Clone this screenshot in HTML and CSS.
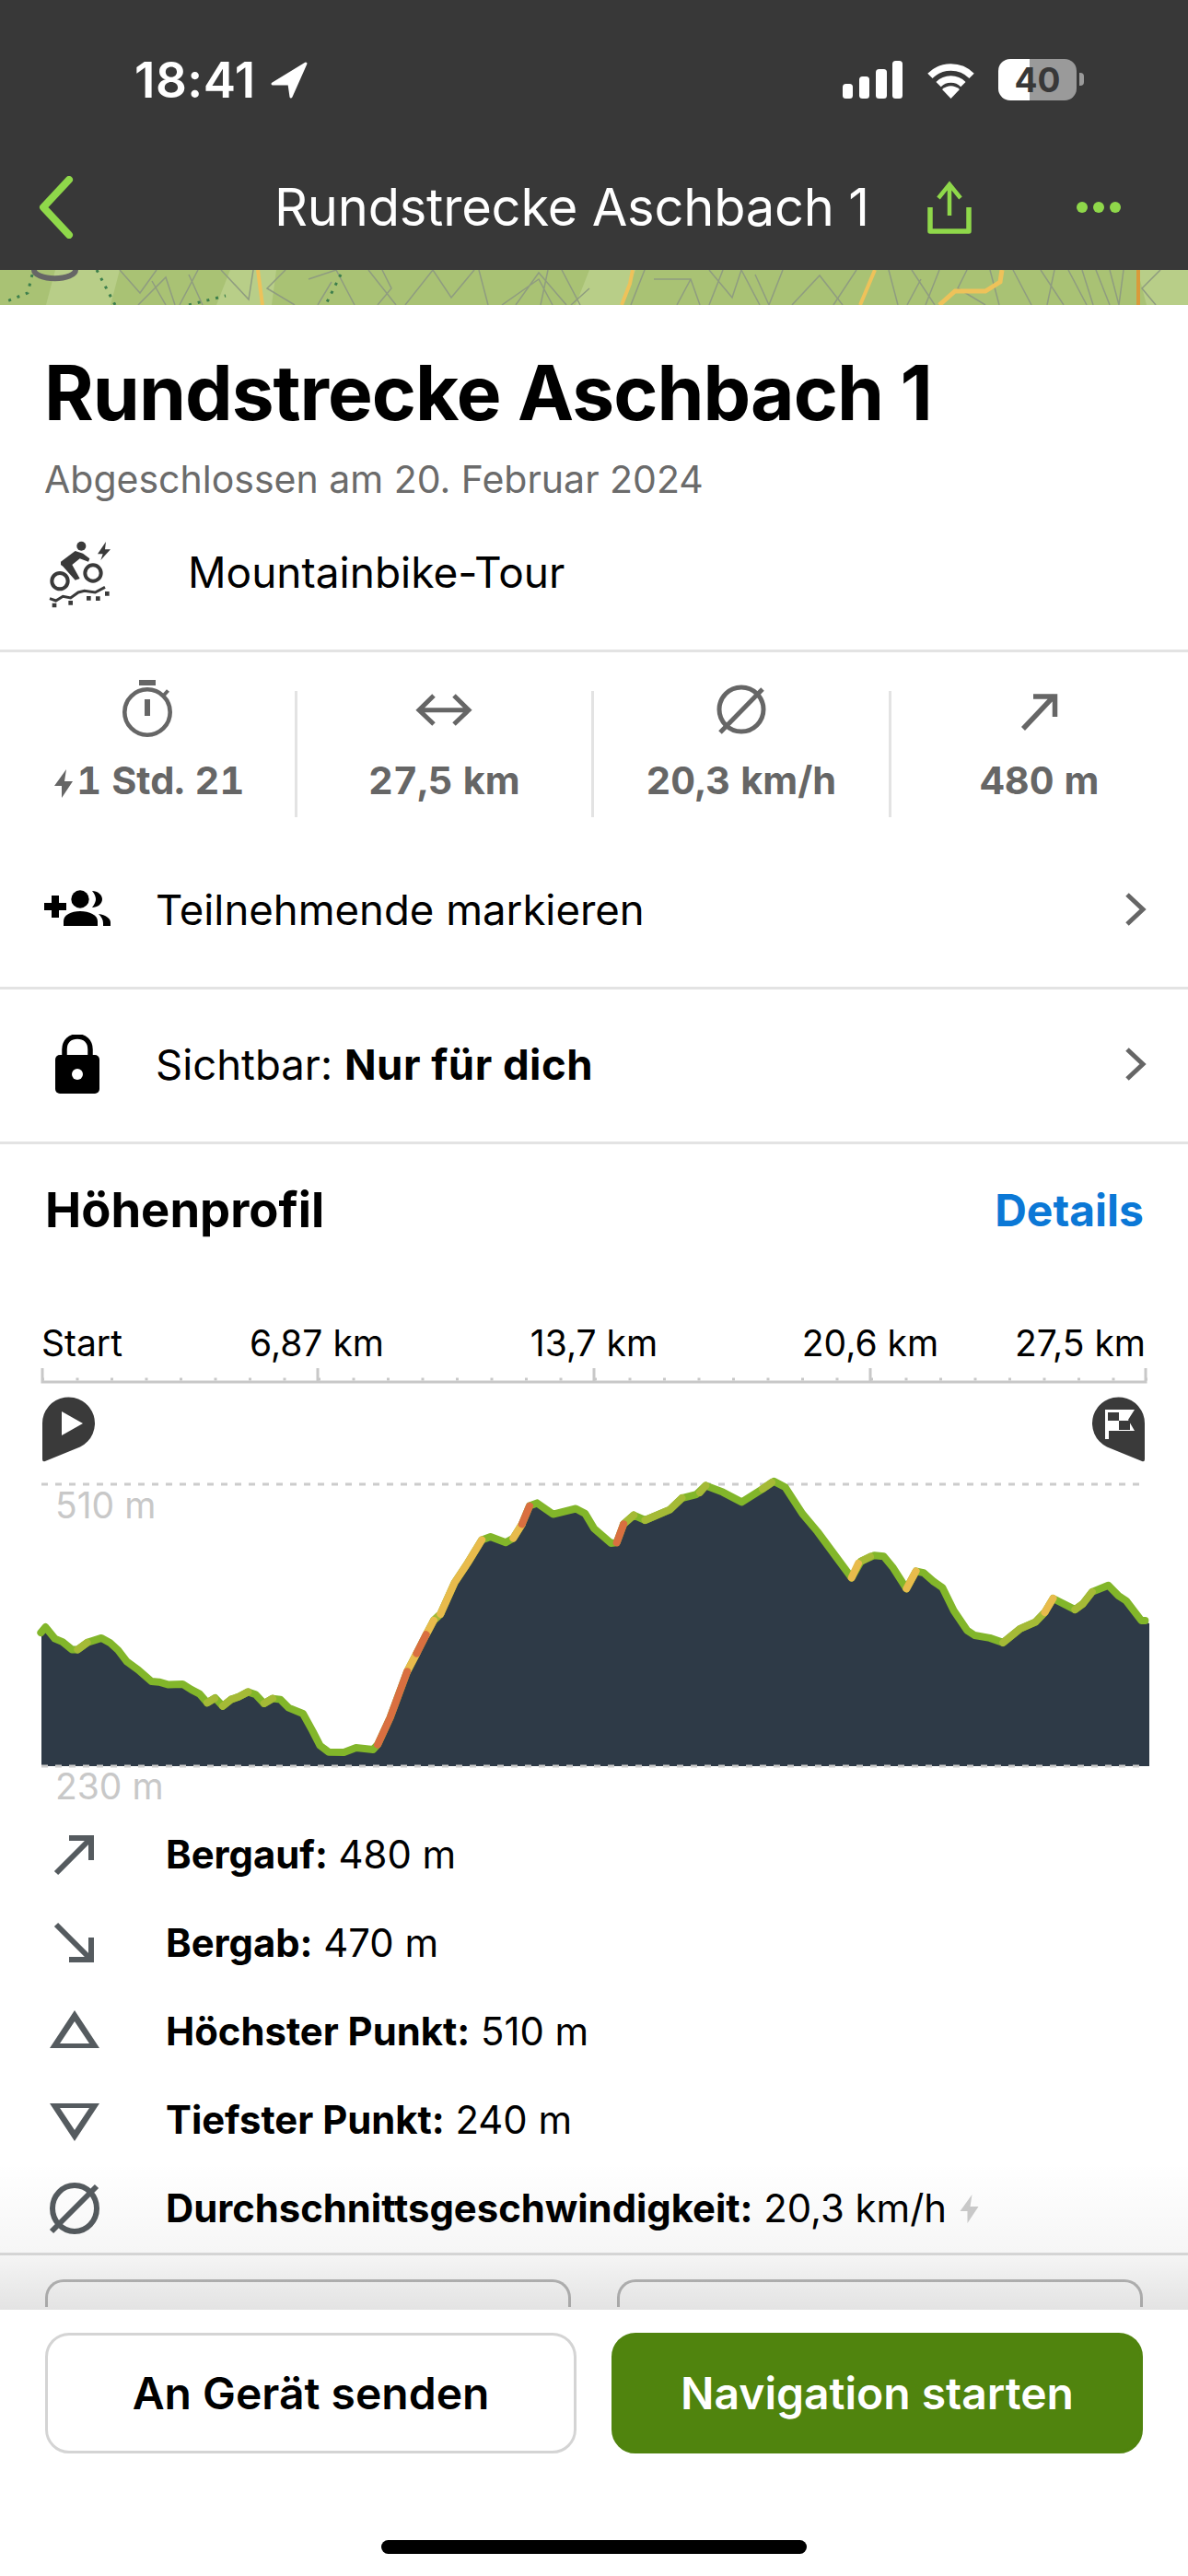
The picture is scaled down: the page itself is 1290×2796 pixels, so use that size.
FILE: index.html
```html
<!DOCTYPE html>
<html lang="de">
<head>
  <meta charset="UTF-8" />
  <title>Rundstrecke Aschbach 1</title>
  <link rel="stylesheet" href="styles.css">
</head>
<body>
<div class="page">

  <!-- Status bar + nav -->
  <header class="top">
    <div class="status-bar">
      <span class="time">18:41</span>
      <svg class="loc" width="41" height="40" viewBox="0 0 41 40"><path d="M39 2 3 24h18l2 14z" fill="#fff" stroke="#fff" stroke-width="3" stroke-linejoin="round"/></svg>
      <div class="status-right">
        <svg width="66" height="42" viewBox="0 0 66 42" fill="#fff">
          <rect x="0" y="25" width="11" height="16" rx="3.5"/>
          <rect x="18" y="17" width="11" height="24" rx="3.5"/>
          <rect x="36" y="9" width="12" height="32" rx="3.5"/>
          <rect x="54" y="0" width="11" height="41" rx="3.5"/>
        </svg>
        <svg class="wifi" width="57" height="40" viewBox="0 0 57 40">
          <path d="M5.9 15.4a32 32 0 0 1 45.2 0" fill="none" stroke="#fff" stroke-width="7.5"/>
          <path d="M15.1 24.6a19 19 0 0 1 26.8 0" fill="none" stroke="#fff" stroke-width="7.5"/>
          <path d="M28.5 40 19 30q9.500-7.500 19 0z" fill="#fff"/>
        </svg>
        <div class="battery">40</div>
      </div>
    </div>
    <nav class="nav-bar">
      <svg width="38" height="68" viewBox="0 0 38 68"><path d="M33 4 5 34l28 30" fill="none" stroke="#8fd84a" stroke-width="8" stroke-linecap="round" stroke-linejoin="round"/></svg>
      <div class="nav-title">Rundstrecke Aschbach 1</div>
      <svg width="48" height="58" viewBox="0 0 48 58" fill="none" stroke="#8fd84a">
        <path d="M24 38V4M12 19 24 4l12 15" stroke-width="4.500"/>
        <path d="M3 29v26h42V29" stroke-width="5.500" stroke-linejoin="round"/>
      </svg>
      <div class="nav-dots"><i></i><i></i><i></i></div>
    </nav>
  </header>

  <!-- Map strip -->
  <svg class="map" width="1290" height="38" viewBox="0 0 1290 38">
    <rect width="1290" height="38" fill="#a9c274"/>
    <path d="M60 0h70l-10 38H50zM250 0h50l-5 38h-60zM640 0h50l-15 38h-50zM1235 0h55v38h-45z" fill="#b8ce88"/>
    <g fill="none" stroke="#8f9c80" stroke-width="1.500">
      <path d="M130 0l22 25 18-25M150 38l30-30 10 30M215 0l-20 38M240 0l30 32 5-32M165 12l15 26M205 5l15 33"/>
      <path d="M310 0l-20 20 30 18M335 10l30-10 20 38M400 0l30 38M440 38l30-38 20 30 25-30M345 38l15-25M415 0l10 20-15 18"/>
      <path d="M520 0l10 38M545 38l40-28 15 28M610 0l20 38M640 20l-20 18M700 0l-15 38M560 38l25-35 30 35M595 0l-8 38"/>
      <path d="M710 10h40l10 28M770 0l25 30 10-30 20 38M850 0l-15 38M860 38l30-32 25 32M785 0l-15 38M820 5l15 33M735 38l15-28"/>
      <path d="M930 0l-25 38M990 0l25 38M1020 0l-15 38M1050 0l-10 20 30 18M1100 0l20 38M965 0l10 38M1000 10l-15 28M1075 0l10 38"/>
      <path d="M1130 0l25 38M1160 0l20 38M1190 0l15 38M1260 0l-20 20 15 18M1145 0l-8 38M1175 0l12 38M1205 0l10 38M1220 0l-5 38"/>
    </g>
    <g fill="none" stroke="#3d7f4c" stroke-width="3" stroke-dasharray="3 7">
      <path d="M35 5 30 25 5 35M105 0l20 38M370 5l-15 30M205 38l40-10"/>
    </g>
    <path d="M37 0a22 9 0 0 0 45 0" fill="none" stroke="#666" stroke-width="6"/>
    <g fill="none" stroke="#eec25a" stroke-width="4">
      <path d="M280 0l5 38M687 0l-3 15-9 23M950 0l-16 38"/>
      <path d="M1088 0l-2 13-16 10h-33l-17 15" stroke-width="5"/>
      <path d="M1236 0v38" stroke="#d99a3a"/>
    </g>
  </svg>

  <div class="scroll">

    <section class="summary">
      <h1>Rundstrecke Aschbach 1</h1>
      <p class="finished">Abgeschlossen am 20. Februar 2024</p>
      <div class="tour-type">
        <svg width="100" height="90" viewBox="0 -6 300 270" fill="#3a3a3a">
          <circle cx="145" cy="44" r="15"/>
          <path d="M78 95l47-35 25 8 22 17-4 10-28-10-25 20 25 45-15 5-40-45-7-5z"/>
          <g fill="none" stroke="#3a3a3a" stroke-width="12">
            <circle cx="75" cy="158" r="26"/>
            <circle cx="183" cy="132" r="26"/>
          </g>
          <path d="M42 215l20 7 23-14 25 5 25-18 20-5 35 5 32-17" fill="none" stroke="#3a3a3a" stroke-width="9"/>
          <path d="M50 230h14v14H50zM103 222h14v14h-14zM162 207h14v14h-14zM192 208h14v14h-14zM222 192h14v14h-14z"/>
          <path d="M225 30l-27 40h17l-7 20 32-35h-18z"/>
        </svg>
        <span>Mountainbike-Tour</span>
      </div>
    </section>

    <section class="stats">
      <div class="stat stat-time">
        <svg class="stat-icon" width="64" height="64" viewBox="0 0 64 64" fill="none" stroke="#666">
          <path d="M23 5h18" stroke-width="6"/>
          <circle cx="32" cy="37" r="24.700" stroke-width="4.600"/>
          <path d="M32 23v18" stroke-width="6"/>
          <path d="M49.500 19l5-5.500" stroke-width="4"/>
        </svg>
        <div class="stat-value"><svg class="bolt" width="20" height="31" viewBox="0 0 20 31"><path d="M13 0 0 18h8L8 31 20 13h-9z" fill="#666"/></svg>1 Std. 21</div>
      </div>
      <div class="stat">
        <svg class="stat-icon" width="64" height="64" viewBox="0 0 64 64" fill="none" stroke="#666" stroke-width="5">
          <path d="M5 34.700h54M21 19 5 34.700 21 50M43 19l16 15.700L43 50"/>
        </svg>
        <div class="stat-value">27,5 km</div>
      </div>
      <div class="stat">
        <svg class="stat-icon" width="64" height="64" viewBox="0 0 64 64" fill="none" stroke="#666" stroke-width="5">
          <circle cx="32" cy="34" r="24"/>
          <path d="M9 59 55 12"/>
        </svg>
        <div class="stat-value">20,3 km/h</div>
      </div>
      <div class="stat">
        <svg class="stat-icon" width="64" height="64" viewBox="0 0 64 64" fill="none" stroke="#666" stroke-width="5.500">
          <path d="M14 55 48 19M25 20h23.500v22"/>
        </svg>
        <div class="stat-value">480 m</div>
      </div>
    </section>

    <section class="actions">
      <div class="action-row">
        <svg width="76" height="44" viewBox="0 0 76 44">
          <path d="M10 7h8v8h8v8h-8v8h-8v-8H2v-8h8z"/>
          <circle cx="41" cy="11" r="9.700"/>
          <path d="M23 40v-5c0-7 8-11 18-11s19 4 19 11v5z"/>
          <path d="M54 2c6 0 11 4 11 9s-5 9-11 9c3-4 4-7 4-9s-1-6-4-9zM61 27c8 1 13 5 13 9v4h-8v-3c0-4-2-7-5-10z"/>
        </svg>
        <span class="action-label">Teilnehmende markieren</span>
        <svg class="chevron" width="24" height="36" viewBox="0 0 24 36"><path d="M3 2l17 16L3 34" fill="none" stroke="#666" stroke-width="5"/></svg>
      </div>
      <div class="action-row">
        <svg width="76" height="64" viewBox="0 0 76 64">
          <path d="M24 24v-8c0-9 6-14 14-14s14 5 14 14v8" fill="none" stroke="#000" stroke-width="5.500"/>
          <rect x="14" y="22" width="48" height="42" rx="5"/>
          <circle cx="38" cy="43" r="6" fill="#fff"/>
        </svg>
        <span class="action-label">Sichtbar: <b>Nur für dich</b></span>
        <svg class="chevron" width="24" height="36" viewBox="0 0 24 36"><path d="M3 2l17 16L3 34" fill="none" stroke="#666" stroke-width="5"/></svg>
      </div>
    </section>

    <section class="elevation">
      <div class="section-head">
        <h2>Höhenprofil</h2>
        <span class="details-link">Details</span>
      </div>

      <svg class="chart" width="1290" height="535" viewBox="0 30 1290 535">
        <text class="axis-label" x="45" y="72">Start</text>
        <text class="axis-label" x="344" y="72" text-anchor="middle">6,87 km</text>
        <text class="axis-label" x="645" y="72" text-anchor="middle">13,7 km</text>
        <text class="axis-label" x="945" y="72" text-anchor="middle">20,6 km</text>
        <text class="axis-label" x="1244" y="72" text-anchor="end">27,5 km</text>

        <!-- ruler -->
        <path class="ruler" d="M46 85v15h1198V85M345 85v15M645 85v15M945 85v15"/>
        <line class="ruler" x1="45" y1="97" x2="1246" y2="97" stroke-dasharray="3 34.500" stroke-width="6"/>

        <!-- start / finish pins -->
        <path id="pin" d="M46 145a28.500 28.500 0 1 1 41 25.500L49 186q-3 1-3-2z" fill="#3a3a3a"/>
        <path d="M67 132l23 13-23 13z" fill="#fff"/>
        <use href="#pin" transform="translate(1289 0) scale(-1 1)"/>
        <path d="M1200 130h32l-7 11 7 12h-28v9h-4z" fill="#fff"/>
        <path d="M1203 133h12v9h-12zM1215 142h12v10h-12z" fill="#3a3a3a"/>

        <line class="dash" x1="45" y1="211" x2="1240" y2="211"/>
        <text class="range-label" x="60" y="248">510 m</text>

        <polygon class="area" points="45,517 45,372 49.400,366.100 59.600,378.600 67.900,382.100 78.100,390.400 84.300,390.400 94.600,382.900 110.200,377.900 119.300,382.900 128.300,391.100 137.800,403.600 150.100,412.500 164.500,425 172.700,425.700 183,428.600 198.200,427.900 207.700,433.900 216.800,438.600 225,448.200 233.600,442.900 241.800,451.800 250.900,444.600 259.100,441.800 269.400,436.400 277.600,439.300 286.700,448.900 296.100,443.600 304.400,444.600 313.400,453.600 329,460 339.300,478.600 347.500,494.600 357,501.800 373.500,502.100 386.600,497.100 405.100,498.900 410.100,493.600 423.600,464.300 442.100,414.300 452.400,394.600 462.700,374.300 470.900,358.900 478.300,351.800 493.600,317.900 507.900,296.400 523.200,271.400 532.600,267.900 549.100,274.300 557.300,269.600 566.800,254.300 575,234.600 583.200,231.400 600.500,243.600 625.200,237.500 635.400,242.900 645,258.900 663.500,275 669.700,274.300 677.100,254.300 688.200,244.600 700.500,250 727.300,238.600 740.400,226.100 756.100,222.100 766.300,212.500 784.800,219.600 805.400,230.400 828,216.100 840.400,207.900 852.700,214.300 871.200,242.900 887.700,262.500 906.200,287.500 924.700,312.500 935,294.600 949.400,288.200 959.600,289.300 969.900,301.800 984.300,324.300 994.600,305.400 1002.800,307.100 1013.100,316.100 1023.400,323.200 1035.700,348.200 1050.100,369.600 1058.300,375 1074.800,377.900 1089.200,382.900 1107.700,367.900 1124.200,360.700 1134.500,350 1143.500,335 1167.400,347.100 1175.600,341.100 1185.900,327.900 1203.500,320.700 1214.600,332.100 1222.900,337.500 1239.300,358.900 1248,362 1248,517"/>
        <polyline class="track" points="44.400,372.100 49.400,366.100 59.600,378.600 67.900,382.100 78.100,390.400 84.300,390.400 94.600,382.900 110.200,377.900 119.300,382.900 128.300,391.100 137.800,403.600 150.100,412.500 164.500,425 172.700,425.700 183,428.600 198.200,427.900 207.700,433.900 216.800,438.600 225,448.200 233.600,442.900 241.800,451.800 250.900,444.600 259.100,441.800 269.400,436.400 277.600,439.300 286.700,448.900 296.100,443.600 304.400,444.600 313.400,453.600 329,460 339.300,478.600 347.500,494.600 357,501.800 373.500,502.100 386.600,497.100 405.100,498.900 410.100,493.600 423.600,464.300 442.100,414.300 452.400,394.600 462.700,374.300 470.900,358.900 478.300,351.800 493.600,317.900 507.900,296.400 523.200,271.400 532.600,267.900 549.100,274.300 557.300,269.600 566.800,254.300 575,234.600 583.200,231.400 600.500,243.600 625.200,237.500 635.400,242.900 645,258.900 663.500,275 669.700,274.300 677.100,254.300 688.200,244.600 700.500,250 727.300,238.600 740.400,226.100 756.100,222.100 766.300,212.500 784.800,219.600 805.400,230.400 828,216.100 840.400,207.900 852.700,214.300 871.200,242.900 887.700,262.500 906.200,287.500 924.700,312.500 935,294.600 949.400,288.200 959.600,289.300 969.900,301.800 984.300,324.300 994.600,305.400 1002.800,307.100 1013.100,316.100 1023.400,323.200 1035.700,348.200 1050.100,369.600 1058.300,375 1074.800,377.900 1089.200,382.900 1107.700,367.900 1124.200,360.700 1134.500,350 1143.500,335 1167.400,347.100 1175.600,341.100 1185.900,327.900 1203.500,320.700 1214.600,332.100 1222.900,337.500 1239.300,358.900 1243.400,358.900"/>

        <!-- steepness colours -->
        <g class="seg seg-olive">
          <polyline points="84.300,390.400 94.600,382.900"/>
          <polyline points="225,448.200 233,443.500"/>
          <polyline points="241.800,451.800 250.900,444.600 259.100,441.800 269.400,436.400"/>
          <polyline points="286.700,448.900 296.100,443.600"/>
          <polyline points="470.900,358.900 478.300,351.800"/>
          <polyline points="677.100,254.300 688.200,244.600"/>
          <polyline points="700.500,250 727.300,238.600 740.400,226.100"/>
          <polyline points="760,220 766.300,212.500"/>
          <polyline points="828,216.100 838,209"/>
          <polyline points="935,294.600 945,289.500"/>
          <polyline points="1089.200,382.900 1107.700,367.900 1124.200,360.700 1134.500,350"/>
          <polyline points="1167.400,347.100 1175.600,341.100 1185.900,327.900"/>
        </g>
        <g class="seg seg-yellow">
          <polyline points="442.100,414.300 452.400,394.600"/>
          <polyline points="462.700,374.300 470.900,358.900"/>
          <polyline points="478.300,351.800 493.600,317.900 507.900,296.400 523.200,271.400"/>
          <polyline points="557.300,269.600 566.800,254.300"/>
          <polyline points="924.700,312.500 932,297"/>
          <polyline points="984.300,324.300 994.600,305.400"/>
          <polyline points="1134.500,350 1143.500,335"/>
        </g>
        <g class="seg seg-orange">
          <polyline points="410.100,493.600 423.600,464.300 442.100,414.300"/>
          <polyline points="452.400,394.600 462.700,374.300"/>
          <polyline points="566.800,254.300 575,234.600"/>
          <polyline points="669.700,274.300 677.100,254.300"/>
        </g>

        <line class="dash" x1="45" y1="517" x2="1240" y2="517"/>
        <text class="range-label" x="60" y="553">230 m</text>
      </svg>
    </section>

    <ul class="facts">
      <li>
        <svg width="60" height="60" viewBox="0 0 60 60" fill="none" stroke="#555b5f" stroke-width="6"><path d="M11 50 49 12M25 12h24v24"/></svg>
        <span><b>Bergauf:</b> 480 m</span>
      </li>
      <li>
        <svg width="60" height="60" viewBox="0 0 60 60" fill="none" stroke="#555b5f" stroke-width="6"><path d="M11 10l38 38M25 48h24V24"/></svg>
        <span><b>Bergab:</b> 470 m</span>
      </li>
      <li>
        <svg width="60" height="60" viewBox="0 0 60 60"><path d="M31 7l27 41H4zM31 19 15 43h32z" fill="#555b5f" fill-rule="evenodd"/></svg>
        <span><b>Höchster Punkt:</b> 510 m</span>
      </li>
      <li>
        <svg width="60" height="60" viewBox="0 0 60 60"><path d="M4 12h54L31 53zM15 17l16 24 16-24z" fill="#555b5f" fill-rule="evenodd"/></svg>
        <span><b>Tiefster Punkt:</b> 240 m</span>
      </li>
      <li>
        <svg width="60" height="60" viewBox="0 0 60 60" fill="none" stroke="#555b5f" stroke-width="6"><ellipse cx="31" cy="30" rx="24" ry="25"/><path d="M6 55 55 6"/></svg>
        <span><b>Durchschnittsgeschwindigkeit:</b> 20,3 km/h</span>
        <svg class="bolt-small" width="21" height="31" viewBox="0 0 20 31"><path d="M13 0 0 18h8L8 31 20 13h-9z" fill="#ccc"/></svg>
      </li>
    </ul>

    <div class="more-cards"><div></div><div></div></div>
    <div class="fade"></div>
  </div>

  <!-- Bottom buttons -->
  <footer class="bottom-bar">
    <div class="buttons">
      <button class="btn">An Gerät senden</button>
      <button class="btn btn-primary">Navigation starten</button>
    </div>
    <div class="home-indicator"></div>
  </footer>

</div>
</body>
</html>
```

FILE: styles.css
```css
* {
  box-sizing: border-box;
}
body {
  margin: 0;
  font-family: Inter, "Noto Sans", sans-serif;
  color: #000;
  background: #fff;
}
.page {
  display: flex;
  flex-direction: column;
  width: 1290px;
  height: 2796px;
  overflow: hidden;
}

/* top */
.top {
  height: 293px;
  background: #383838;
  flex: none;
}
.status-bar {
  display: flex;
  align-items: center;
  height: 170px;
  padding: 3px 121px 0 146px;
  color: #fff;
}
.time {
  font-size: 53px;
  font-weight: 600;
  letter-spacing: 0.5px;
}
.loc {
  margin-left: 15px;
}
.status-right {
  display: flex;
  align-items: center;
  gap: 23px;
  margin-left: auto;
}
.battery {
  position: relative;
  width: 85px;
  height: 45px;
  border-radius: 13px;
  background: linear-gradient(to right, #fff 40%, #9a9a9a 40%);
  color: #383838;
  font-size: 37px;
  font-weight: 700;
  line-height: 45px;
  text-align: center;
}
.battery::after {
  content: "";
  position: absolute;
  right: -8px;
  top: 15px;
  width: 5px;
  height: 14px;
  border-radius: 0 4px 4px 0;
  background: #9a9a9a;
}
.nav-bar {
  display: flex;
  align-items: center;
  height: 123px;
  padding: 0 0 14px 42px;
  color: #fff;
}
.nav-title {
  flex: none;
  width: 709px;
  margin-left: 218px;
  font-size: 56px;
  letter-spacing: -0.2px;
  white-space: nowrap;
}
.nav-dots {
  display: flex;
  gap: 6px;
  margin-left: 114px;
}
.nav-dots i {
  width: 12px;
  height: 12px;
  border-radius: 50%;
  background: #8fd84a;
}
.map {
  display: block;
  flex: none;
}

.scroll {
  position: relative;
  flex: 1;
  overflow: hidden;
}
.fade {
  position: absolute;
  left: 0;
  right: 0;
  bottom: 0;
  height: 160px;
  background: linear-gradient(rgba(0,0,0,0), rgba(0,0,0,0.035) 60%, rgba(0,0,0,0.11));
  pointer-events: none;
}

/* summary */
.summary {
  padding-top: 46px;
  border-bottom: 3px solid #e3e3e3;
}
h1 {
  margin: 0;
  padding-left: 48px;
  font-size: 82px;
  font-weight: 700;
  letter-spacing: -1px;
  line-height: 100px;
  white-space: nowrap;
}
.finished {
  margin: 18px 0 0;
  padding-left: 48px;
  color: #6b6b6b;
  font-size: 41px;
  line-height: 50px;
}
.tour-type {
  display: flex;
  align-items: center;
  gap: 64px;
  height: 151px;
  margin-bottom: 9px;
  padding-left: 40px;
  font-size: 46px;
}

/* stats */
.stats {
  display: grid;
  grid-template-columns: repeat(4, 1fr);
  padding-top: 42px;
}
.stat {
  height: 137px;
  border-right: 3px solid #e3e3e3;
  text-align: center;
}
.stat:last-child {
  border-right: none;
}
.stat-icon {
  display: block;
  margin: -14px auto 0;
}
.stat-value {
  margin-top: 22px;
  color: #666;
  font-size: 41.5px;
  font-weight: 700;
  font-variant-numeric: tabular-nums;
  line-height: 50px;
  white-space: nowrap;
}
.stat-time .stat-value {
  padding-left: 5px;
}
.bolt {
  margin-right: 4px;
  vertical-align: -4px;
}

/* action rows */
.actions {
  margin-top: 19px;
}
.action-row {
  display: flex;
  align-items: center;
  gap: 47px;
  height: 168px;
  padding: 0 45px 3px 46px;
  border-bottom: 3px solid #e3e3e3;
  font-size: 45.5px;
}
.action-label b {
  font-weight: 700;
  letter-spacing: 0.5px;
}
.chevron {
  margin-left: auto;
}

/* elevation */
.section-head {
  display: flex;
  align-items: center;
  justify-content: space-between;
  height: 148px;
  margin-bottom: 40px;
  padding: 0 48px 6px 49px;
}
h2 {
  margin: 0;
  font-size: 52.5px;
  font-weight: 700;
}
.details-link {
  color: #0b78d6;
  font-size: 48px;
  font-weight: 700;
}
.chart {
  display: block;
}
.axis-label {
  font-size: 39px;
}
.range-label {
  fill: #c8c8c8;
  font-size: 39px;
}
.ruler {
  fill: none;
  stroke: #c8c8c8;
  stroke-width: 3;
}
.dash {
  stroke: #cccccc;
  stroke-width: 3;
  stroke-dasharray: 7 8;
}
.area {
  fill: #2e3a47;
}
.track, .seg polyline {
  fill: none;
  stroke-width: 8;
  stroke-linecap: round;
  stroke-linejoin: round;
}
.track {
  stroke: #82b62a;
}
.seg-olive polyline {
  stroke: #a5ba36;
}
.seg-yellow polyline {
  stroke: #e8bb4c;
}
.seg-orange polyline {
  stroke: #d96f40;
}

/* facts */
.facts {
  list-style: none;
  margin: 0;
  padding: 0;
}
.facts li {
  display: flex;
  align-items: center;
  height: 96px;
  padding-left: 50px;
  font-size: 41.8px;
}
.facts li span {
  margin-left: 70px;
}
.facts b {
  font-weight: 700;
}
.bolt-small {
  margin-left: 14px;
}
.more-cards {
  display: flex;
  gap: 50px;
  margin-top: 0;
  padding: 26px 49px 0;
  border-top: 3px solid #ddd;
}
.more-cards div {
  flex: 1;
  height: 30px;
  border: 3px solid #bbb;
  border-bottom: none;
  border-radius: 20px 20px 0 0;
}

/* bottom */
.bottom-bar {
  flex: none;
  height: 289px;
  padding: 25px 49px 0;
  background: #fff;
}
.buttons {
  display: flex;
  gap: 38px;
}
.btn {
  flex: 1;
  height: 131px;
  border: 3px solid #d4d4d4;
  border-radius: 26px;
  background: #fff;
  color: #000;
  font-family: Inter, sans-serif;
  font-size: 48px;
  font-weight: 600;
}
.btn-primary {
  border-color: #50840e;
  background: #50840e;
  color: #fff;
}
.home-indicator {
  width: 462px;
  height: 15px;
  margin: 94px auto 0;
  border-radius: 8px;
  background: #000;
}
```
